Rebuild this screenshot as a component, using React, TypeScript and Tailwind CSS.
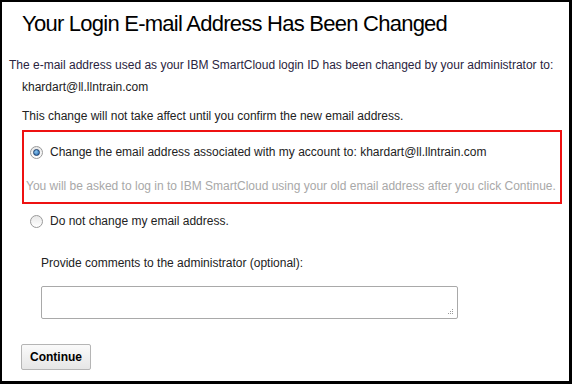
import React from 'react';

export default function App() {
  return (
    <div className="w-[572px] h-[384px] bg-black pl-[2px] pt-[2px] pr-[3px] pb-[3px] font-['Liberation_Sans',Arial,sans-serif]">
      <div className="w-full h-full bg-white flex flex-col items-start text-[12px] leading-[14px] text-[#222]">
        <h1 className="ml-[20px] mt-[8px] text-[22px] leading-[28px] tracking-[-0.75px] text-black">
          Your Login E-mail Address Has Been Changed
        </h1>
        <p className="ml-[7px] mt-[20px] text-[#2a2440]">
          The e-mail address used as your IBM SmartCloud login ID has been changed by your administrator to:
        </p>
        <p className="ml-[20px] mt-[8px]">khardart@ll.llntrain.com</p>
        <p className="ml-[20px] mt-[15px]">This change will not take affect until you confirm the new email address.</p>

        <div className="ml-[20px] mt-[7px] w-[540px] h-[74px] border-2 border-[#ee1111]">
          <label className="flex items-center gap-[7px] pl-[6px] pt-[13px]">
            <Radio checked />
            <span>Change the email address associated with my account to: khardart@ll.llntrain.com</span>
          </label>
          <p className="pl-[2px] pt-[20px] text-[#a8a8a8]">
            You will be asked to log in to IBM SmartCloud using your old email address after you click Continue.
          </p>
        </div>

        <label className="ml-[28px] mt-[10px] flex items-center gap-[7px]">
          <Radio />
          <span>Do not change my email address.</span>
        </label>

        <p className="ml-[39px] mt-[28px]">Provide comments to the administrator (optional):</p>
        <div className="relative ml-[39px] mt-[16px] w-[417px] h-[33px] border border-[#a9a9a9] rounded-[2px]">
          <svg className="absolute right-[3px] bottom-[3px]" width="6" height="6" viewBox="0 0 6 6">
            <rect x="4" y="0" width="1" height="1" fill="#999" />
            <rect x="2" y="2" width="1" height="1" fill="#999" />
            <rect x="4" y="2" width="1" height="1" fill="#999" />
            <rect x="0" y="4" width="1" height="1" fill="#999" />
            <rect x="2" y="4" width="1" height="1" fill="#999" />
            <rect x="4" y="4" width="1" height="1" fill="#999" />
          </svg>
        </div>

        <button className="ml-[19px] mt-[25px] w-[70px] h-[26px] border border-[#b5b5b5] rounded-[2px] bg-gradient-to-b from-[#fafafa] to-[#e6e6e6] font-bold text-[12px] text-black">
          Continue
        </button>
      </div>
    </div>
  );
}

function Radio({ checked = false }: { checked?: boolean }) {
  return (
    <span className="w-[13px] h-[13px] rounded-full border border-[#9a9a9a] bg-gradient-to-b from-[#e8e8e8] to-[#ffffff] flex items-center justify-center shrink-0">
      {checked && <span className="w-[7px] h-[7px] rounded-full border border-[#1d3f6b] bg-[radial-gradient(circle_at_40%_35%,#8ec8f0,#1a5ea8)]" />}
    </span>
  );
}
